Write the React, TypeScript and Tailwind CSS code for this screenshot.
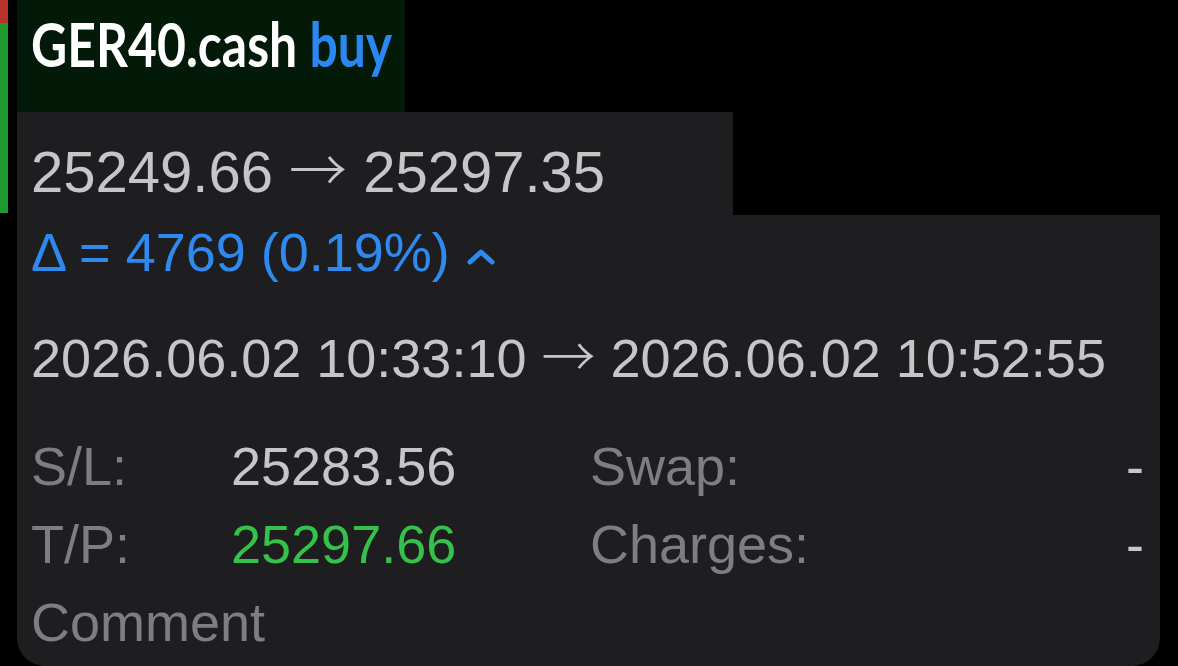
export default function App() {
  return (
    <div className="w-[1178px] h-[666px] bg-black overflow-hidden flex font-['Liberation_Sans',Arial,sans-serif]">
      {/* side strips */}
      <div className="w-[8px] flex flex-col shrink-0">
        <div className="h-[23px] bg-[#b8322a]" />
        <div className="h-[190px] bg-[#1f9a2e]" />
      </div>

      <div className="ml-[9px] flex flex-col">
        <div className="w-[388px] h-[112px] bg-[#021a07] pl-[14px] pt-[12px] font-['Lato',sans-serif] font-bold text-[62px] leading-none whitespace-nowrap">
          <div className="inline-block origin-left scale-x-[0.805]">
            <span className="text-white">GER40.cash</span>{" "}
            <span className="text-[#2a88f2]">buy</span>
          </div>
        </div>

        <div className="w-[716px] h-[103px] bg-[#1e1e20] pl-[14px] pt-[31px] text-[58px] leading-none text-[#c6c6c8] whitespace-nowrap">
          25249.66 <span className="font-['Noto_Sans_CJK_JP',sans-serif] font-light leading-[0]">→</span> 25297.35
        </div>

        <div className="w-[1143px] h-[451px] bg-[#1e1e20] rounded-b-[28px] pl-[14px] pr-[16px] pt-[10px] text-[54px] leading-none whitespace-nowrap">
          <div className="flex items-center text-[#2f8af0]">
            <span>Δ = 4769 (0.19%)</span>
            <svg width="28" height="18" viewBox="0 0 28 18" className="ml-[17px] mt-[8px]">
              <polyline
                points="3,15 14,5 25,15"
                fill="none"
                stroke="#2f8af0"
                strokeWidth="5"
                strokeLinecap="round"
                strokeLinejoin="round"
              />
            </svg>
          </div>

          <div className="mt-[52px] text-[#c6c6c8]">
            2026.06.02 10:33:10 <span className="font-['Noto_Sans_CJK_JP',sans-serif] font-light leading-[0]">→</span> 2026.06.02 10:52:55
          </div>

          <div className="mt-[42px] grid grid-cols-[200px_359px_1fr_auto] leading-[78px]">
            <span className="text-[#7e7e80]">S/L:</span>
            <span className="text-[#c6c6c8]">25283.56</span>
            <span className="text-[#7e7e80]">Swap:</span>
            <span className="text-[#c6c6c8] text-right">-</span>

            <span className="text-[#7e7e80]">T/P:</span>
            <span className="text-[#34c24b]">25297.66</span>
            <span className="text-[#7e7e80]">Charges:</span>
            <span className="text-[#c6c6c8] text-right">-</span>

            <span className="text-[#7e7e80] col-span-4">Comment</span>
          </div>
        </div>
      </div>
    </div>
  );
}
